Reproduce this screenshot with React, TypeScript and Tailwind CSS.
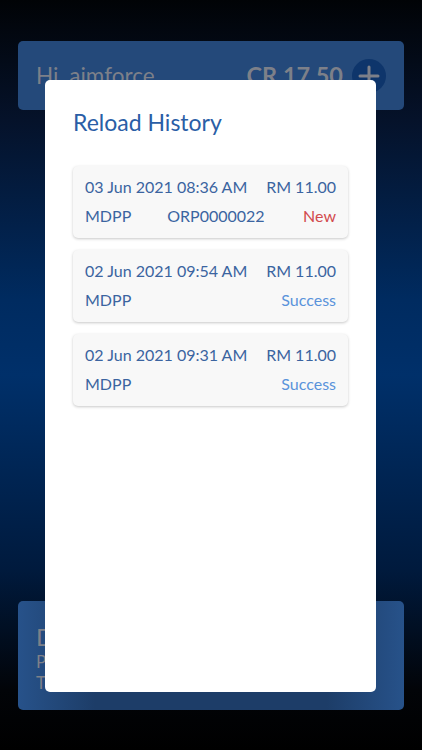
import React from "react";

const font = { fontFamily: "Lato, 'Noto Sans', sans-serif" };

type Row = { date: string; amount: string; method: string; ref?: string; status: string; statusColor: string };

const rows: Row[] = [
  { date: "03 Jun 2021 08:36 AM", amount: "RM 11.00", method: "MDPP", ref: "ORP0000022", status: "New", statusColor: "text-[#d24a4d]" },
  { date: "02 Jun 2021 09:54 AM", amount: "RM 11.00", method: "MDPP", status: "Success", statusColor: "text-[#5a93db]" },
  { date: "02 Jun 2021 09:31 AM", amount: "RM 11.00", method: "MDPP", status: "Success", statusColor: "text-[#5a93db]" },
];

export default function App() {
  return (
    <div
      className="relative w-[422px] h-[750px] overflow-hidden bg-[linear-gradient(to_bottom,#010306_0%,#05122a_16%,#002b60_40%,#00306a_50%,#001a3d_76%,#020408_92%,#000_100%)]"
      style={font}
    >
      <div className="flex flex-col h-full px-[18px] pt-[41px] pb-[40px]">
        <div className="h-[69px] rounded-[5px] bg-[#24497a] flex items-center pl-[18px] pr-[18px]">
          <span className="text-[22.5px] text-[#7d8089]">Hi, aimforce</span>
          <span className="ml-auto text-[23.5px] font-bold text-[#7d8089]">CR 17.50</span>
          <span className="ml-[9px] w-[34px] h-[34px] rounded-full bg-[#0e356b] flex items-center justify-center">
            <svg width="22" height="22" viewBox="0 0 22 22">
              <path d="M11 2v18M2 11h18" stroke="#7d8089" strokeWidth="3" strokeLinecap="round" />
            </svg>
          </span>
        </div>
        <div className="flex-1" />
        <div className="h-[109px] rounded-[5px] bg-[linear-gradient(to_right,#27528a,#1d3d68_20%,#1d3d68_80%,#27528a)] flex flex-col pl-[18px] pt-[22px]">
          <span className="text-[24px] leading-[28px] text-[#7d8089]">D</span>
          <span className="text-[17px] leading-[21px] text-[#7d8089]">P</span>
          <span className="text-[17px] leading-[21px] text-[#7d8089]">T</span>
        </div>
      </div>

      <div className="absolute left-[45px] top-[80px] w-[331px] h-[612px] bg-white rounded-[5px] px-[28px] pt-[28px]">
        <div className="text-[23px] leading-[28px] text-[#2a5ea6]">Reload History</div>
        <div className="mt-[30px] flex flex-col gap-[12px]">
          {rows.map((r, i) => (
            <div
              key={i}
              className="h-[72px] rounded-[5px] bg-[#f8f8f8] shadow-[0_1px_3px_rgba(0,0,0,0.22)] px-[12px] pt-[10px] text-[16px] text-[#3b64a0]"
            >
              <div className="flex justify-between leading-[22px]">
                <span>{r.date}</span>
                <span>{r.amount}</span>
              </div>
              <div className="flex items-center leading-[22px] mt-[7px]">
                <span>{r.method}</span>
                {r.ref && <span className="ml-[36px]">{r.ref}</span>}
                <span className={`ml-auto ${r.statusColor}`}>{r.status}</span>
              </div>
            </div>
          ))}
        </div>
      </div>
    </div>
  );
}
